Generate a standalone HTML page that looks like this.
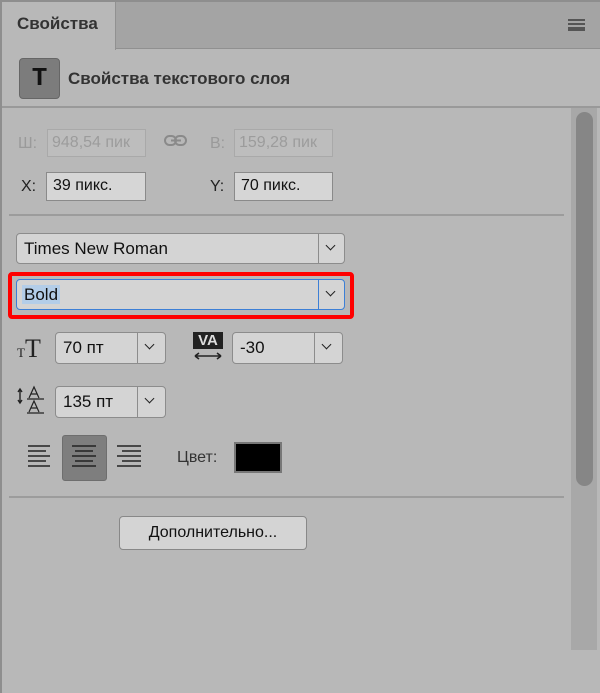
<!DOCTYPE html>
<html><head><meta charset="utf-8"><style>
*{margin:0;padding:0;box-sizing:border-box}
body{width:600px;height:693px;background:#b8b8b8;font-family:"Liberation Sans",Arial,sans-serif;position:relative;overflow:hidden;color:#111}
.a{position:absolute}
.box{position:absolute;background:#d6d6d6;border:1px solid #8a8a8a;font-size:16px;line-height:26px;padding-left:6px}
.dd{position:absolute;background:#d4d4d4;border:1px solid #8c8c8c;border-radius:4px;font-size:17px;padding-left:7px}
.dd .s{position:absolute;right:0;top:0;bottom:0;width:26px;border-left:1px solid #8c8c8c}
.dd .s:after{content:"";position:absolute;left:8px;top:8px;width:6px;height:6px;border-right:1.6px solid #222;border-bottom:1.6px solid #222;transform:rotate(45deg)}
.lab{position:absolute;font-size:16px;color:#222}
.hr{position:absolute;height:2px;background:#9c9c9c}
</style></head><body>
<div class="a" style="left:0;top:0;width:600px;height:2px;background:#8e8e8e"></div>
<div class="a" style="left:0;top:0;width:2px;height:693px;background:#8e8e8e"></div>
<div class="a" style="left:2px;top:2px;width:598px;height:47px;background:#a4a4a4;border-bottom:1px solid #909090"></div>
<div class="a" style="left:2px;top:2px;width:114px;height:48px;background:#b8b8b8;border-right:1px solid #919191"></div>
<div class="a" style="left:17px;top:14px;font-size:17px;font-weight:bold;color:#333">Свойства</div>
<div class="a" style="left:568px;top:19px;width:17px;height:12px;border-top:2px solid #555;border-bottom:2px solid #555"><div style="margin-top:2px;height:2px;background:#555"></div><div style="margin-top:2px;height:2px;background:#555"></div></div>
<div class="a" style="left:19px;top:58px;width:41px;height:41px;background:#7c7c7c;border:1px solid #666;border-radius:4px;font-family:'Liberation Mono',monospace;font-weight:bold;font-size:26px;text-align:center;line-height:38px;color:#111">T</div>
<div class="a" style="left:68px;top:69px;font-size:17px;font-weight:bold;color:#333">Свойства текстового слоя</div>
<div class="a" style="left:2px;top:106px;width:598px;height:2px;background:#999"></div>
<div class="a" style="left:571px;top:108px;width:26px;height:542px;background:#a8a8a8"></div>
<div class="a" style="left:576px;top:112px;width:17px;height:374px;background:#868686;border-radius:9px"></div>

<div class="lab" style="left:18px;top:135px;color:#9a9a9a">Ш:</div>
<div class="box" style="left:47px;top:129px;width:99px;height:28px;background:#bdbdbd;border-color:#a9a9a9;color:#9c9c9c;overflow:hidden;white-space:nowrap;padding-left:4px">948,54 пик</div>
<svg class="a" style="left:163px;top:133px" width="26" height="16"><rect x="2" y="3" width="11" height="9" rx="4.5" fill="none" stroke="#8a8a8a" stroke-width="2"/><rect x="12" y="3" width="11" height="9" rx="4.5" fill="none" stroke="#8a8a8a" stroke-width="2"/><line x1="8" y1="7.5" x2="18" y2="7.5" stroke="#8a8a8a" stroke-width="2"/></svg>
<div class="lab" style="left:210px;top:135px;color:#9a9a9a">В:</div>
<div class="box" style="left:234px;top:129px;width:99px;height:28px;background:#bdbdbd;border-color:#a9a9a9;color:#9c9c9c;overflow:hidden;white-space:nowrap;padding-left:4px">159,28 пик</div>
<div class="lab" style="left:21px;top:178px">X:</div>
<div class="box" style="left:46px;top:172px;width:100px;height:29px;padding-left:6px">39 пикс.</div>
<div class="lab" style="left:210px;top:178px">Y:</div>
<div class="box" style="left:234px;top:172px;width:99px;height:29px">70 пикс.</div>
<div class="hr" style="left:9px;top:214px;width:555px"></div>

<div class="dd" style="left:16px;top:233px;width:329px;height:31px;line-height:29px">Times New Roman<div class="s"></div></div>
<div class="a" style="left:8px;top:272px;width:346px;height:47px;border:4px solid #f00;border-radius:4px"></div>
<div class="dd" style="left:16px;top:279px;width:329px;height:31px;line-height:29px;border-color:#3c7fd6;padding-left:5px"><span style="background:#b3cde8;padding:0 2px">Bold</span><div class="s" style="border-left-color:#3c7fd6"></div></div>

<div class="a" style="left:17px;top:334px;font-family:'Liberation Serif',serif;color:#222"><span style="font-size:13px">T</span><span style="font-size:26px">T</span></div>
<div class="dd" style="left:55px;top:332px;width:111px;height:32px;line-height:30px">70 пт<div class="s" style="width:28px"></div></div>
<div class="a" style="left:193px;top:332px;width:30px;height:17px;background:#222;color:#ddd;font-weight:bold;font-size:15px;line-height:17px;text-align:center">VA</div>
<svg class="a" style="left:192px;top:351px" width="32" height="10"><path d="M3 5H29M3 5L7 2M3 5L7 8M29 5L25 2M29 5L25 8" stroke="#222" stroke-width="1.6" fill="none"/></svg>
<div class="dd" style="left:232px;top:332px;width:111px;height:32px;line-height:30px">-30<div class="s" style="width:28px"></div></div>

<svg class="a" style="left:16px;top:385px" width="32" height="32"><path d="M4 5V17M2 7L4 4L6 7M2 15L4 18L6 15" stroke="#222" stroke-width="1.4" fill="none"/><g fill="none" stroke="#222" stroke-width="1.2"><path d="M13 13L18 2L23 13M15 9H21M11 14H28"/><path d="M13 27L18 16L23 27M15 23H21M11 28H28"/></g></svg>
<div class="dd" style="left:55px;top:386px;width:111px;height:32px;line-height:30px">135 пт<div class="s" style="width:28px"></div></div>

<div class="a" style="left:62px;top:435px;width:45px;height:46px;background:#7e7e7e;border:1px solid #6e6e6e;border-radius:3px"></div>
<svg class="a" style="left:26px;top:444px" width="120" height="28"><g stroke="#222" stroke-width="1.6"><path d="M2 2H24M2 7H20M2 12H24M2 17H20M2 22H24"/><path d="M46 2H70M49 7H67M46 12H70M49 17H67M46 22H70"/><path d="M91 2H115M96 7H115M91 12H115M96 17H115M91 22H115"/></g></svg>
<div class="lab" style="left:177px;top:449px;color:#333">Цвет:</div>
<div class="a" style="left:234px;top:442px;width:48px;height:31px;background:#000;border:2px solid #777"></div>
<div class="hr" style="left:9px;top:496px;width:555px"></div>
<div class="a" style="left:119px;top:516px;width:188px;height:34px;background:#d4d4d4;border:1px solid #888;border-radius:4px;text-align:center;line-height:32px;font-size:16px">Дополнительно...</div>
</body></html>
